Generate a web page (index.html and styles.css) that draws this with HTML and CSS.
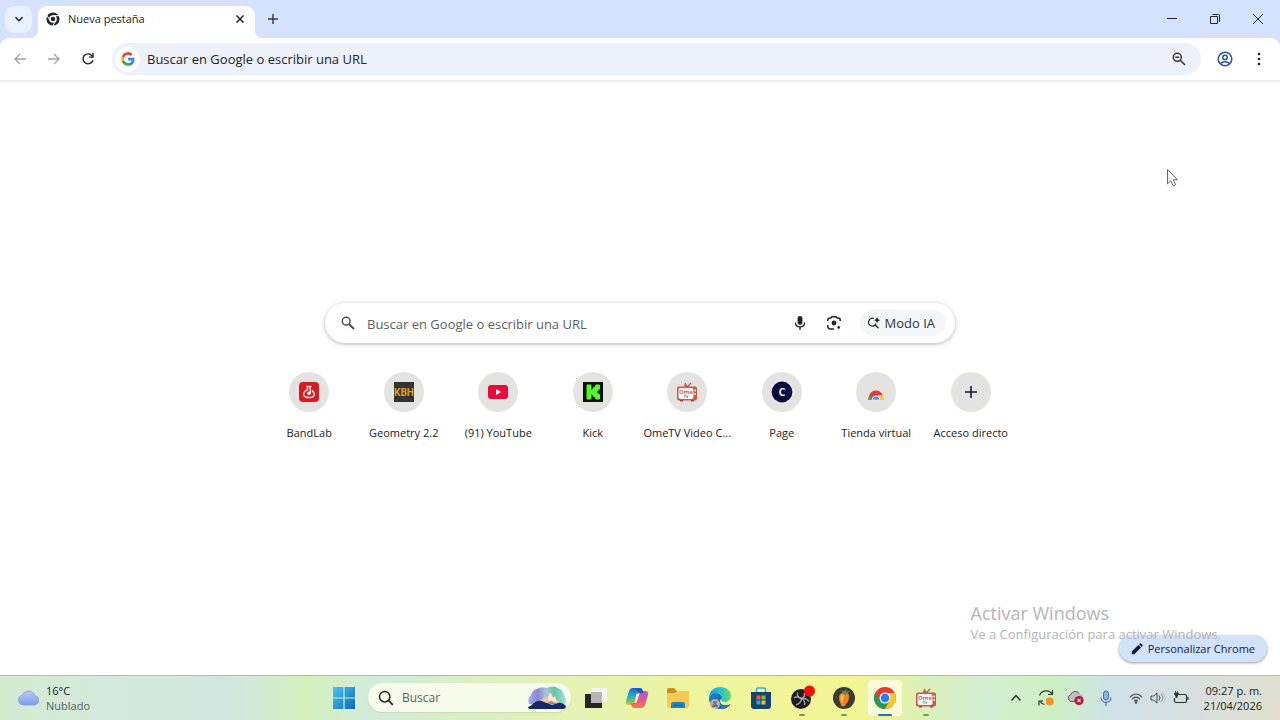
FILE: index.html
```html
<!DOCTYPE html>
<html lang="es">

<head>
    <title>Nueva pestaña</title>
    <meta charset="utf-8" />
    <link rel="stylesheet" href="styles.css">
</head>

<body>
    <header class="browser">
        <div class="tabstrip">
            <button class="tab-search" aria-label="Buscar pestañas">
                <svg width="10" height="10" viewBox="0 0 10 10"><path d="M1.500 3.200 5 6.700l3.500-3.500" fill="none" stroke="#1c2430" stroke-width="1.600"/></svg>
            </button>
            <div class="tab">
                <svg width="14" height="14" viewBox="0 0 14 14">
                    <circle cx="7" cy="7" r="5.200" fill="none" stroke="#25282c" stroke-width="2.800"/>
                    <circle cx="7" cy="7" r="2.300" fill="#25282c"/>
                    <path d="M7 3.700h6.500M4.100 8.700.9 3.200M9.900 8.700 6.700 14" fill="none" stroke="#fff" stroke-width="1"/>
                </svg>
                <span class="tab-title">Nueva pestaña</span>
                <button class="plain" aria-label="Cerrar pestaña">
                    <svg width="10" height="10" viewBox="0 0 10 10"><path d="m1.500 1.500 7 7m0-7-7 7" stroke="#202124" stroke-width="1.500"/></svg>
                </button>
            </div>
            <button class="plain new-tab" aria-label="Nueva pestaña">
                <svg width="12" height="12" viewBox="0 0 12 12"><path d="M6 1v10M1 6h10" stroke="#30343c" stroke-width="1.400"/></svg>
            </button>
            <div class="window-buttons">
                <button class="plain" aria-label="Minimizar">
                    <svg width="12" height="12" viewBox="0 0 12 12"><path d="M1 5.500h10" stroke="#222833"/></svg>
                </button>
                <button class="plain" aria-label="Restaurar">
                    <svg width="12" height="12" viewBox="0 0 12 12"><path d="M1.500 3.500h7v7h-7zM3.500 1.500h6q1 0 1 1v6.500" fill="none" stroke="#222833"/></svg>
                </button>
                <button class="plain" aria-label="Cerrar">
                    <svg width="12" height="12" viewBox="0 0 12 12"><path d="m1 1 10 10m0-10L1 11" stroke="#222833"/></svg>
                </button>
            </div>
        </div>
        <div class="toolbar">
            <button class="plain" aria-label="Atrás" disabled>
                <svg width="14" height="14" viewBox="0 0 14 14"><path d="M13 7H2m5-5L2 7l5 5" fill="none" stroke="#a2a2a5" stroke-width="1.300"/></svg>
            </button>
            <button class="plain" aria-label="Adelante" disabled>
                <svg width="14" height="14" viewBox="0 0 14 14"><path d="M1 7h11M7 2l5 5-5 5" fill="none" stroke="#a2a2a5" stroke-width="1.300"/></svg>
            </button>
            <button class="plain" aria-label="Recargar">
                <svg width="14" height="14" viewBox="0 0 14 14"><path d="M11.800 8.300A5 5 0 1 1 11 3.800l1 1" fill="none" stroke="#202124" stroke-width="1.400"/><path d="M12.700 1v4.800H8V4.500h3.300V1z" fill="#202124"/></svg>
            </button>
            <div class="omnibox">
                <span class="site-badge">
                    <svg width="14" height="14" viewBox="0 0 48 48">
                        <path d="M46.500 24.500c0-1.600-.1-3.100-.4-4.500H24v9h12.700c-.6 3-2.200 5.400-4.700 7.100v6h7.600c4.400-4.100 6.900-10.100 6.900-17.600z" fill="#4285f4"/>
                        <path d="M24 47.500c6.300 0 11.600-2.100 15.600-5.700L32 35.900c-2.100 1.400-4.800 2.300-8 2.300-6.100 0-11.300-4.100-13.200-9.700H3v6.100c3.900 7.700 11.900 12.900 21 12.900z" fill="#34a853"/>
                        <path d="M10.800 28.500a14 14 0 0 1 0-9v-6.100H3a23.500 23.500 0 0 0 0 21.200z" fill="#fbbc05"/>
                        <path d="M24 9.800c3.400 0 6.500 1.200 8.900 3.500l6.800-6.800A23.500 23.500 0 0 0 3 13.400l7.800 6.100C12.700 13.900 17.900 9.800 24 9.800z" fill="#ea4335"/>
                    </svg>
                </span>
                <input type="text" aria-label="Barra de direcciones" placeholder="Buscar en Google o escribir una URL">
                <button class="plain" aria-label="Zoom">
                    <svg width="14" height="14" viewBox="0 0 14 14"><circle cx="5.300" cy="5.300" r="4" fill="none" stroke="#333" stroke-width="1.500"/><path d="m8.300 8.300 4.700 4.700M3.300 5.300h4" stroke="#333" stroke-width="1.500"/></svg>
                </button>
            </div>
            <button class="plain profile" aria-label="Perfil">
                <svg width="16" height="16" viewBox="0 0 16 16"><g fill="none" stroke="#2951ad" stroke-width="1.500"><circle cx="8" cy="8" r="6.800"/><circle cx="8" cy="6.400" r="2.200"/><path d="M3.300 12.700c2.500-2.700 6.900-2.700 9.400 0"/></g></svg>
            </button>
            <button class="plain" aria-label="Menú">
                <svg width="14" height="14" viewBox="0 0 14 14" fill="#202124"><circle cx="7" cy="2" r="1.300"/><circle cx="7" cy="7" r="1.300"/><circle cx="7" cy="12" r="1.300"/></svg>
            </button>
        </div>
    </header>

    <main class="page">
        <div class="searchbox">
            <svg width="14" height="14" viewBox="0 0 14 14"><circle cx="5.200" cy="5.200" r="3.900" fill="none" stroke="#4a4d50" stroke-width="1.500"/><path d="m8 8 5 5" stroke="#4a4d50" stroke-width="1.800"/></svg>
            <input type="text" aria-label="Buscar" placeholder="Buscar en Google o escribir una URL">
            <button class="plain" aria-label="Buscar por voz">
                <svg width="14" height="16" viewBox="0 0 14 16"><rect x="4.600" y="1" width="4.800" height="9" rx="2.400" fill="#202124"/><path d="M2.500 7.500C2.500 13.400 11.500 13.400 11.500 7.500M7 12v3" fill="none" stroke="#202124" stroke-width="1.300"/></svg>
            </button>
            <button class="plain" aria-label="Buscar con Lens">
                <svg width="16" height="16" viewBox="0 0 16 16"><path d="M1.800 6V5a2 2 0 0 1 2-2h1L6 1.800h4L11.200 3h1a2 2 0 0 1 2 2v1M1.800 10v1.500a2.500 2.500 0 0 0 2.500 2.500H8" fill="none" stroke="#202124" stroke-width="1.500"/><circle cx="8" cy="8" r="2.400" fill="#202124"/><circle cx="12.700" cy="12.400" r="1.300" fill="#202124"/></svg>
            </button>
            <button class="ai-mode">
                <svg width="14" height="14" viewBox="0 0 14 14"><path d="M6.800 2.500A3.900 3.900 0 1 0 9 7.800M8 8.700l3.500 3.500" fill="none" stroke="#202124" stroke-width="1.300"/><path d="M10 .8q.4 3 3.400 3.400Q10.400 4.600 10 7.600 9.600 4.600 6.600 4.200 9.600 3.800 10 .8z" fill="#202124"/></svg>
                Modo IA
            </button>
        </div>
        <nav class="shortcuts">
            <a href="#">
                <span class="tile">
                    <svg width="20" height="20" viewBox="0 0 20 20"><rect width="20" height="20" rx="4" fill="#da1a22"/><path d="M7.300 4.500h5.200M8.400 4.500v3.200Q4 10.500 4.700 13q.6 2.500 5.300 2.500t5.300-2.500q.5-2-2.500-4.600" fill="none" stroke="#ffd9d5" stroke-width="1.500"/><path d="M11.200 4.800v6.500" stroke="#fff" stroke-width="1.300"/><circle cx="10" cy="11.300" r="1.700" fill="#fff"/></svg>
                </span>
                <span class="name">BandLab</span>
            </a>
            <a href="#">
                <span class="tile">
                    <svg width="20" height="20" viewBox="0 0 20 20"><path d="M0 0h20v20H0z" fill="#353330"/><text x="10" y="14" text-anchor="middle" font-size="10" class="icon-text narrow" fill="#d6a91b">KBH</text></svg>
                </span>
                <span class="name">Geometry 2.2</span>
            </a>
            <a href="#">
                <span class="tile">
                    <svg width="20" height="14" viewBox="0 0 20 14"><rect width="20" height="14" rx="3" fill="#e90b3c"/><path d="m8 4 5 3-5 3z" fill="#fff"/></svg>
                </span>
                <span class="name">(91) YouTube</span>
            </a>
            <a href="#">
                <span class="tile">
                    <svg width="20" height="20" viewBox="0 0 20 20"><path d="M0 0h20v20H0z" fill="#0a120a"/><path d="M4 3h4v5h1.500l1-2.500h1.200L13 3h3.500v4L15 8.500 13.500 10l1.500 1.500 1.500 1.500v4H13l-1.300-2.500h-1.200l-1-2.500H8v5H4z" fill="#55f827" stroke="#55f827" stroke-linejoin="round"/></svg>
                </span>
                <span class="name">Kick</span>
            </a>
            <a href="#">
                <span class="tile">
                    <svg width="20" height="20" viewBox="0 0 20 20"><use href="#ome"/></svg>
                </span>
                <span class="name">OmeTV Video C...</span>
            </a>
            <a href="#">
                <span class="tile">
                    <svg width="22" height="22" viewBox="0 0 22 22"><circle cx="11" cy="11" r="10.400" fill="#0b0940"/><text x="11" y="15" text-anchor="middle" font-size="11" class="icon-text" fill="#eee">C</text></svg>
                </span>
                <span class="name">Page</span>
            </a>
            <a href="#">
                <span class="tile">
                    <svg width="18" height="18" viewBox="0 0 18 18"><path d="M1 17a8 8 0 0 1 2-5.300l3.600 2.700Q5.700 15.500 5.700 17z" fill="#35a557"/><path d="M2 12.700C4.500 5.800 13.500 5.800 16 12.700H9Q7 12.700 6.300 14.700z" fill="#dc3e37"/><path d="M10.500 12.300h5.700A9 9 0 0 1 17 17h-4.700q0-2.500-1.800-4.700z" fill="#fcc72c"/><path d="M5 17a4 4 0 0 1 8 0z" fill="#4285f4" stroke="#e7eef7"/></svg>
                </span>
                <span class="name">Tienda virtual</span>
            </a>
            <a href="#">
                <span class="tile">
                    <svg width="14" height="14" viewBox="0 0 14 14"><path d="M7 1v12M1 7h12" stroke="#161b34" stroke-width="1.600"/></svg>
                </span>
                <span class="name">Acceso directo</span>
            </a>
        </nav>

        <button class="customize">
            <svg width="12" height="12" viewBox="0 0 12 12"><path d="M.8 11.200V8.600L7.400 2l2.600 2.600-6.600 6.600zM8.100 1.300l.8-.8q.5-.4 1 0l1.600 1.600q.4.500 0 1l-.8.800z" fill="#0d1a3b"/></svg>
            Personalizar Chrome
        </button>
        <div class="watermark">
            <p class="watermark-title">Activar Windows</p>
            <p>Ve a Configuración para activar Windows.</p>
        </div>
        <svg class="cursor" width="14" height="20" viewBox="0 0 14 20"><path d="M1.500 1.500v14.300l3.300-3 2.500 5 2.400-1.200-2.400-4.800h4.200z" fill="#fff" stroke="#666"/></svg>
    </main>

    <footer class="taskbar">
        <button class="weather">
            <svg width="24" height="18" viewBox="0 0 24 18">
                <defs><linearGradient id="cloud" x2="0" y2="1"><stop stop-color="#b8c9f4"/><stop offset="1" stop-color="#7ba0e8"/></linearGradient></defs>
                <path d="M6 16a5 5 0 0 1-.7-9.800A6.800 6.800 0 0 1 17.900 6.500 4.900 4.900 0 0 1 18 16z" fill="url(#cloud)" stroke="#7895d8" stroke-width=".7"/>
            </svg>
            <span>16°C<br><span class="muted">Nublado</span></span>
        </button>
        <div class="center">
            <button class="plain start" aria-label="Inicio">
                <svg width="22" height="22" viewBox="0 0 22 22">
                    <defs><linearGradient id="win" x2="1" y2="1"><stop stop-color="#4fc5ed"/><stop offset="1" stop-color="#0869bc"/></linearGradient></defs>
                    <path d="M0 0h10.400v10.400H0zM11.600 0H22v10.400H11.600zM0 11.600h10.400V22H0zM11.600 11.600H22V22H11.600z" fill="url(#win)"/>
                </svg>
            </button>
            <label class="task-search">
                <svg width="16" height="16" viewBox="0 0 16 16"><circle cx="6.700" cy="6.700" r="5.200" fill="none" stroke="#22262a" stroke-width="1.500"/><path d="m10.500 10.500 4.300 4.300" stroke="#22262a" stroke-width="1.700"/></svg>
                <input type="text" placeholder="Buscar" aria-label="Buscar en Windows">
                <svg width="40" height="24" viewBox="0 0 40 24">
                    <defs>
                        <linearGradient id="sky"><stop stop-color="#a9aee8"/><stop offset=".25" stop-color="#8a86d2"/><stop offset=".48" stop-color="#a9c6dc"/><stop offset=".7" stop-color="#5fc6a5"/><stop offset="1" stop-color="#a5e3da"/></linearGradient>
                    </defs>
                    <path d="M2 18Q0 12 4 9q1-5 6-6 5-3 9-1 7-3 12 0 5 2 6 7 3 4 1 10z" fill="url(#sky)"/>
                    <path d="m12 16 6-5 3 1 1-6 3 2 2 5 4 1 4 6z" fill="#edc59d"/>
                    <path d="m20 14 3-7 3 5 2-2 2 6z" fill="#f6ead2"/>
                    <path d="m18 18 6-3 6 3z" fill="#c07f78"/>
                    <path d="M1 21q3-1 6-4 5-4 10-1l8 3 6-2q4-1 8 3 0 3-3 3H4q-3 0-3-2z" fill="#172866"/>
                </svg>
            </label>
            <div class="apps">
                <button class="plain" aria-label="Vista de tareas">
                    <svg width="22" height="22" viewBox="0 0 22 22"><path d="M7 1h15v14H7z" fill="#f5f5ed"/><path d="M0 7h17v14H0z" fill="#252525"/><path d="M6 5h11v11H6z" fill="#b5b5b4"/></svg>
                </button>
                <button class="plain" aria-label="Copilot">
                    <svg width="24" height="22" viewBox="0 0 24 22">
                        <defs>
                            <linearGradient id="cp1" x2="0" y2="1"><stop stop-color="#2160d2"/><stop offset=".5" stop-color="#26afd1"/><stop offset=".8" stop-color="#7cc35c"/><stop offset="1" stop-color="#e8c934"/></linearGradient>
                            <linearGradient id="cp2" x2="0" y2="1"><stop stop-color="#a85be0"/><stop offset=".55" stop-color="#e6558b"/><stop offset="1" stop-color="#fb7a48"/></linearGradient>
                        </defs>
                        <path d="M8 1h7q2 0 2.700 2.500L18.500 6H16q-3 0-4 3l-2 6q-1 3-4 3H3.500Q0 18 1 14L4 4q1-3 4-3z" fill="url(#cp1)"/>
                        <path d="M16 21H9q-2 0-2.700-2.500L5.500 16H8q3 0 4-3l2-6q1-3 4-3h2.500Q24 4 23 8l-3 10q-1 3-4 3z" fill="url(#cp2)"/>
                        <path d="M11.300 7.500q.8-1.500 3.200-1.500l-2.200 7.500Q11.500 16 9.500 16z" fill="#f0f4b0"/>
                        <path d="M8 1h7q2 0 2.700 2.500L18.500 6H15q-2 0-2.500-2T10 1.500z" fill="#2455bd"/>
                    </svg>
                </button>
                <button class="plain" aria-label="Explorador de archivos">
                    <svg width="24" height="22" viewBox="0 0 24 22"><path d="M1 3q0-2 2-2h5l3 3h10q2 0 2 2v13H1z" fill="#c98f1e"/><path d="M1 6h8l2-2h10q2 0 2 2v13q0 2-2 2H3q-2 0-2-2z" fill="#f7cb52"/><path d="M5 21v-4q0-2 2-2h10q2 0 2 2v4z" fill="#2382bd"/><path d="M8 18.500h8" stroke="#17659b"/></svg>
                </button>
                <button class="plain" aria-label="Edge">
                    <svg width="24" height="24" viewBox="0 0 24 24">
                        <defs>
                            <linearGradient id="edge1"><stop stop-color="#1c9fe0"/><stop offset=".6" stop-color="#2cc3c9"/><stop offset="1" stop-color="#6ddc58"/></linearGradient>
                            <linearGradient id="edge2" x2="1" y2="1"><stop stop-color="#1b86d4"/><stop offset="1" stop-color="#124a8a"/></linearGradient>
                        </defs>
                        <path d="M1 11.500C1.500 5 6.500 1 12.300 1 18.500 1 23 5.300 23 10c0 3.700-2.700 6-6 6-2.800 0-4.200-1.200-3.500-2.300C16 10 11.500 6 7 7.300 4 8 2 9.500 1 11.500z" fill="url(#edge1)"/>
                        <path d="M1 12c1-3.500 4-5 7-5 4 0 6.500 2.800 6 5.500-3 .5-3 6.500 3.500 6.800 1.800 0 3.200-.6 4.200-1.100.5-.2.800.1.500.6C20 21.800 16.300 23.200 12 23 5.500 23 .6 18 1 12z" fill="url(#edge2)"/>
                        <path d="M10 10c-3 2.500-3.500 8.500 1 12.800 4.500.7 8.500-1 10.500-3.800-7 2.500-13-2-11.500-9z" fill="#2574b8"/>
                        <circle cx="7" cy="18" r="5" fill="#b5b2ad"/><circle cx="7" cy="16.500" r="1.800" fill="#707070"/><path d="M3.800 21c0-4 6.400-4 6.400 0z" fill="#707070"/>
                    </svg>
                </button>
                <button class="plain" aria-label="Microsoft Store">
                    <svg width="22" height="22" viewBox="0 0 22 22"><path d="M6.500 6V2.500q0-1.500 1.500-1.500h6q1.500 0 1.500 1.500V6" fill="none" stroke="#42aae1" stroke-width="1.600"/><path d="M1 5h20v14q0 3-3 3H4q-3 0-3-3z" fill="#17446f"/><path d="M6.500 8.500H10.500V12.500H6.500z" fill="#ee5b3b"/><path d="M11.500 8.500H15.500V12.500H11.500z" fill="#82bd35"/><path d="M6.500 13.500H10.500V17.500H6.500z" fill="#2fa9e0"/><path d="M11.500 13.500H15.500V17.500H11.500z" fill="#f8b926"/></svg>
                </button>
                <button class="plain running" aria-label="OBS Studio">
                    <svg width="26" height="26" viewBox="0 0 26 26">
                        <circle cx="12" cy="14" r="10" fill="#1d1b1f"/>
                        <g fill="none" stroke="#a9aaac" stroke-width="1.300"><path d="M8.500 7.500q-1 5 4 6"/><path d="M12.500 13.500q5-1 7.500 3"/><path d="M12.500 13.500q-.5 5-5.500 6.500"/><path d="M5 13q3-2.500 7.500.5M15 8q2 3-2.500 5.500M15.500 20q1-4.500-3-6.500"/></g>
                        <circle cx="20.500" cy="6" r="5.500" fill="#f80b0b"/>
                    </svg>
                </button>
                <button class="plain running" aria-label="FL Studio">
                    <svg width="24" height="24" viewBox="0 0 24 24"><circle cx="12" cy="12" r="11" fill="#373c36"/><path d="M7.500 9q2-3 5-2 4-1 4.500 3 .5 4-2 7-2 3.500-4 3.500T8.300 17q-2-5-.8-8z" fill="#f37f20"/><path d="M9 9q2-1 3 1-1.500 3-1.500 8Q7.500 13 9 9z" fill="#ffc051"/><path d="M12.500 8.500q-3-2-3-4.500l2.500 1.500L14 3l.5 2.500 3-.5q-1 3.500-5 3.500z" fill="#4d9a36"/></svg>
                </button>
                <button class="plain running active" aria-label="Google Chrome">
                    <svg width="24" height="24" viewBox="0 0 24 24"><circle cx="12" cy="12" r="11" fill="#e33b2e"/><path d="M2.500 6.500A11 11 0 0 0 12 23l5-8.300-5 2.300-5-2.500z" fill="#259d4f"/><path d="M12 7h9.800A11 11 0 0 1 12 23l4.700-8.200z" fill="#f9c722"/><circle cx="12" cy="12" r="5.500" fill="#fff"/><circle cx="12" cy="12" r="4.400" fill="#287de8"/></svg>
                </button>
                <button class="plain running" aria-label="OmeTV">
                    <svg width="20" height="20" viewBox="0 0 20 20">
                        <g id="ome"><path d="m8 1 2.500 4L14 .8M7 3l3 2" fill="none" stroke="#ce5040" stroke-width="1.300"/><rect y="4.500" width="20" height="14" rx="2" fill="#d45342"/><path d="M3 18h3v1.500H3zM14 18h3v1.500h-3z" fill="#a94335"/><rect x="1.500" y="6" width="15" height="11" rx="2" fill="#fff"/><circle cx="18.200" cy="8.500" r=".9" fill="#fff"/><circle cx="18.200" cy="12" r=".9" fill="#fff"/><text x="9" y="12" text-anchor="middle" font-size="6" class="icon-text" fill="#d3604e">Ome</text><text x="9" y="16" text-anchor="middle" font-size="4" class="icon-text" fill="#448c79">TV</text></g>
                    </svg>
                </button>
            </div>
        </div>
        <div class="tray">
            <button class="plain" aria-label="Iconos ocultos">
                <svg width="12" height="12" viewBox="0 0 12 12"><path d="m1.500 8.500 4.500-5 4.500 5" fill="none" stroke="#22262a" stroke-width="1.300"/></svg>
            </button>
            <button class="plain" aria-label="Actualizaciones">
                <svg width="16" height="18" viewBox="0 0 16 18"><path d="M1.500 6.500c2-6 10-6 12.500-1.500M14.500 1v4.500H10M6.500 15.500Q3.500 15 2 12M1 16.500V12h4" fill="none" stroke="#30343a" stroke-width="1.200"/><circle cx="11.700" cy="12.500" r="4" fill="#f7931d"/></svg>
            </button>
            <button class="plain" aria-label="OneDrive">
                <svg width="18" height="16" viewBox="0 0 18 16"><path d="M4 11.500a3.500 3.500 0 0 1-.5-6.700 5 5 0 0 1 8.800-1.200Q16 4 16.500 8v3.500z" fill="#bdc0bd"/><path d="M11 11.500H4a3.500 3.500 0 0 1-.5-6.700 5 5 0 0 1 8.800-1.200" fill="none" stroke="#585c5b"/><circle cx="12" cy="10.500" r="4.600" fill="#c31234"/><path d="m10.500 9 3 3m0-3-3 3" stroke="#fff" stroke-width="1.300"/></svg>
            </button>
            <button class="plain" aria-label="Micrófono">
                <svg width="14" height="16" viewBox="0 0 14 16"><rect x="4.500" y="1" width="5" height="9" rx="2.500" fill="#8bb2dd" stroke="#4170a7"/><path d="M2 7.500C2 14 12 14 12 7.500M7 12.500V16" fill="none" stroke="#4170a7" stroke-width="1.200"/></svg>
            </button>
            <button class="system" aria-label="Red, volumen y batería">
                <svg width="14" height="14" viewBox="0 0 14 14"><g fill="none" stroke="#3e4b4e" stroke-width="1.100"><path d="M1 6q6-6 12 0M3 8.200q4-4 8 0M5 10.200q2-2 4 0"/></g><circle cx="7" cy="11.500" r="1.200" fill="#3e4b4e"/></svg>
                <svg width="16" height="14" viewBox="0 0 16 14"><g fill="none" stroke="#3e4b4e"><path d="M1 5h2.500L7 2v10L3.500 9H1zM9 4.500q2 2.500 0 5"/><path d="M11 3q3.500 4 0 8" opacity=".5"/><path d="M13 1.800q4 5.200 0 10.400" opacity=".2"/></g></svg>
                <svg width="16" height="14" viewBox="0 0 16 14"><path d="M6 3.500h6q1.500 0 1.500 1.500v5q0 1.500-1.500 1.500H3q-1.500 0-1.500-1.500V7M15 6v3" fill="none" stroke="#26302d" stroke-width="1.200"/><path d="M2.500 0v2M4.500 0v2M1.500 2h4v1.500l-1.300 1.500v1.500H2.800V5L1.500 3.500z" fill="#26302d" stroke="#26302d" stroke-width=".7"/></svg>
            </button>
            <time class="clock" datetime="2026-04-21T21:27">09:27 p. m.<br>21/04/2026</time>
        </div>
    </footer>
</body>

</html>
```

FILE: styles.css
```css
* {
    box-sizing: border-box;
}

body {
    margin: 0;
    min-height: 100vh;
    display: flex;
    flex-direction: column;
    background: #fff;
    color: #202124;
    font-family: "Open Sans", "Noto Sans", sans-serif;
    font-size: 11px;
}

button,
input {
    font: inherit;
    color: inherit;
    border: 0;
    padding: 0;
}

input {
    flex: 1;
    min-width: 0;
    background: none;
    outline: 0;
}

input::placeholder {
    color: inherit;
    opacity: 1;
}

svg {
    display: block;
    flex: none;
}

.icon-text {
    font-family: "Open Sans", sans-serif;
    font-weight: 700;
}

.icon-text.narrow {
    font-family: Roboto, sans-serif;
}

.plain {
    display: flex;
    align-items: center;
    justify-content: center;
    background: none;
}

/* browser frame */
.browser {
    background: #d5e2fd;
}

.tabstrip {
    display: flex;
    align-items: center;
    height: 38px;
    padding-left: 5px;
}

.tab-search {
    display: flex;
    align-items: center;
    justify-content: center;
    width: 27px;
    height: 27px;
    border-radius: 9px;
    background: #eaf1fe;
}

.tab {
    position: relative;
    align-self: flex-end;
    display: flex;
    align-items: center;
    gap: 8px;
    width: 217px;
    height: 32px;
    margin-left: 6px;
    padding: 0 10px 7px 8px;
    border-radius: 9px 9px 0 0;
    background: #fff;
}

.tab::before,
.tab::after {
    content: "";
    position: absolute;
    bottom: 0;
    width: 8px;
    height: 8px;
}

.tab::before {
    right: 100%;
    background: radial-gradient(circle at 0 0, transparent 8px, #fff 8px);
}

.tab::after {
    left: 100%;
    background: radial-gradient(circle at 100% 0, transparent 8px, #fff 8px);
}

.tab-title {
    flex: 1;
}

.new-tab {
    width: 36px;
}

.window-buttons {
    display: flex;
    margin-left: auto;
    padding-right: 1px;
}

.window-buttons button {
    width: 43px;
    height: 36px;
}

.toolbar {
    display: flex;
    align-items: center;
    height: 44px;
    padding: 0 4px 0 3px;
    border-bottom: 2px solid #ececee;
    border-radius: 9px 9px 0 0;
    background: #fff;
}

.toolbar > button {
    width: 34px;
    height: 34px;
}

.omnibox {
    flex: 1;
    display: flex;
    align-items: center;
    height: 32px;
    margin-left: 7px;
    padding: 0 15px 0 3px;
    border-radius: 16px;
    background: #edf1fa;
    font-size: 13px;
}

.site-badge {
    display: flex;
    align-items: center;
    justify-content: center;
    width: 25px;
    height: 25px;
    margin-right: 7px;
    border-radius: 50%;
    background: #fff;
}

.toolbar .profile {
    margin-left: 7px;
}

/* new tab page */
.page {
    position: relative;
    flex: 1;
    display: flex;
    flex-direction: column;
    align-items: center;
    justify-content: center;
    padding-bottom: 14px;
}

.searchbox {
    display: flex;
    align-items: center;
    width: 630px;
    max-width: 100%;
    height: 40px;
    padding: 0 9px 0 16px;
    border-radius: 20px;
    box-shadow: 0 1px 4px #0000004d;
    font-size: 13px;
    color: #5d6063;
}

.searchbox input {
    margin-left: 12px;
    padding-top: 2px;
}

.searchbox .plain {
    width: 34px;
    height: 34px;
}

.ai-mode {
    display: flex;
    align-items: center;
    gap: 3px;
    height: 27px;
    margin-left: 9px;
    padding: 0 11px 0 7px;
    border-radius: 14px;
    background: #f4f7f8;
    color: #303336;
}

.shortcuts {
    display: grid;
    grid-template-columns: repeat(8, 1fr);
    width: 756px;
    max-width: 100%;
    margin-top: 29px;
}

.shortcuts a {
    display: flex;
    flex-direction: column;
    align-items: center;
    gap: 13px;
    color: inherit;
    text-decoration: none;
}

.tile {
    display: flex;
    align-items: center;
    justify-content: center;
    width: 40px;
    height: 40px;
    border-radius: 50%;
    background: #e3e4e2;
}

.name {
    line-height: 16px;
    white-space: nowrap;
}

.customize {
    position: absolute;
    right: 13px;
    bottom: 13px;
    display: flex;
    align-items: center;
    gap: 5px;
    height: 27px;
    padding: 0 12px;
    border-radius: 14px;
    background: #d3e2fc;
    box-shadow: 0 1px 3px #00000066;
    color: #10214b;
}

.watermark {
    position: absolute;
    right: 59px;
    bottom: 31px;
    color: #b3b5b8;
    font-size: 13px;
    line-height: 20px;
}

.watermark p {
    margin: 0;
}

.watermark .watermark-title {
    font-size: 18px;
    line-height: 22px;
}

.cursor {
    position: absolute;
    top: 86px;
    right: 100px;
}

/* windows taskbar */
.taskbar {
    display: grid;
    grid-template-columns: 1fr auto 1fr;
    align-items: center;
    height: 45px;
    padding-bottom: 1px;
    border-top: 1px solid #b2bda9;
    background: linear-gradient(90deg, #d2ebcf, #d5e8dc 8%, #d2e6e0 18%, #d4efbd 24%, #d2ebda 29%, #e0f0bb 41%, #eef5a0 54%, #f3f594 67%, #d8f0bd 73%, #d5eed4 77%, #cdf0c0 82%, #cfe1e8 87%, #d6dfdf 93%, #dfdfd0);
}

.weather {
    display: flex;
    align-items: center;
    gap: 5px;
    padding-left: 17px;
    background: none;
    text-align: left;
    line-height: 15px;
}

.muted {
    color: #53605a;
}

.center {
    display: flex;
    align-items: center;
    gap: 4px;
    padding-right: 9px;
}

.start {
    width: 40px;
    height: 40px;
}

.task-search {
    display: flex;
    align-items: center;
    width: 203px;
    height: 29px;
    padding: 0 4px 0 10px;
    border-radius: 15px;
    background: #f7fbea;
    box-shadow: 0 1px 1px #8a9a7040;
    font-size: 12px;
    color: #5e625c;
}

.task-search input {
    margin-left: 8px;
}

.apps {
    display: grid;
    grid-template-columns: repeat(9, 1fr);
    width: 372px;
}

.apps button {
    position: relative;
    height: 36px;
}

.apps .active {
    justify-self: center;
    width: 34px;
    border-radius: 4px;
    background: #fbfbdc;
}

.running::after {
    content: "";
    position: absolute;
    bottom: 0;
    left: calc(50% - 3px);
    width: 6px;
    height: 2px;
    border-radius: 1px;
    background: #85906a;
}

.running.active::after {
    left: calc(50% - 7px);
    width: 14px;
    background: #2074b2;
}

.tray {
    display: flex;
    align-items: center;
    justify-content: flex-end;
    padding-right: 18px;
}

.tray .plain {
    width: 30px;
    height: 36px;
}

.system {
    display: flex;
    align-items: center;
    gap: 7px;
    margin-left: 8px;
    background: none;
}

.clock {
    margin-left: 15px;
    text-align: right;
    line-height: 15px;
}
```
